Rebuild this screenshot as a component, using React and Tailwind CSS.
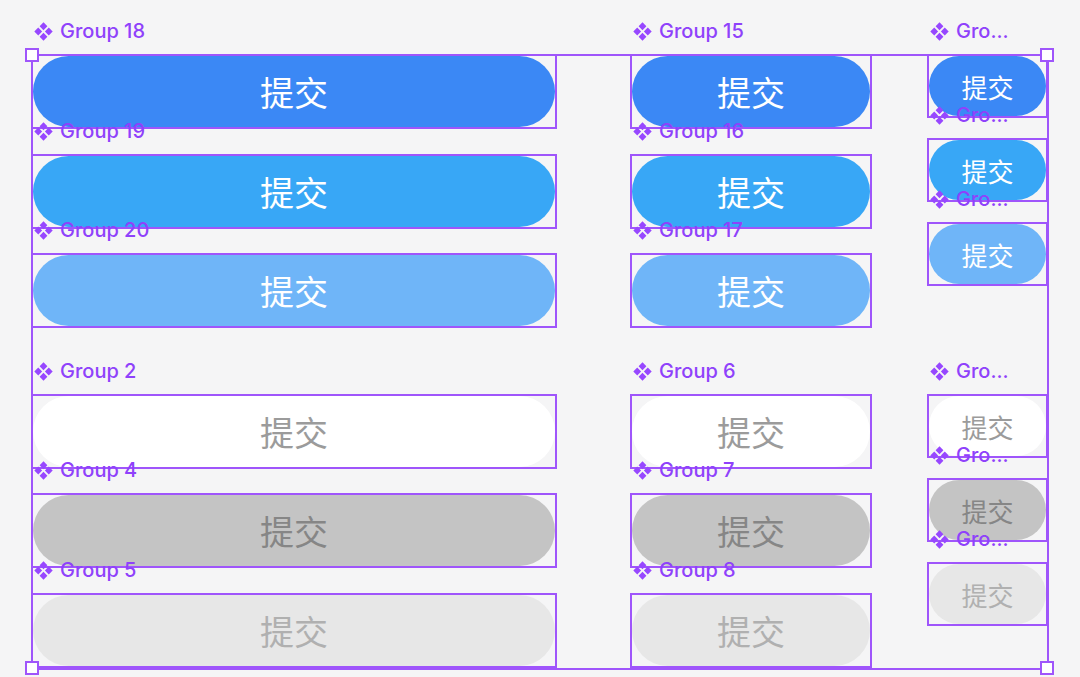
const PURPLE = '#9747ff';

function ComponentIcon() {
  return (
    <svg width="19" height="19" viewBox="0 0 18 18" className="shrink-0" aria-hidden="true">
      <path d="M9 0.3 L12.7 4 L9 7.7 L5.3 4 Z" fill={PURPLE} />
      <path d="M9 10.3 L12.7 14 L9 17.7 L5.3 14 Z" fill={PURPLE} />
      <path d="M4 5.3 L7.7 9 L4 12.7 L0.3 9 Z" fill={PURPLE} />
      <path d="M14 5.3 L17.7 9 L14 12.7 L10.3 9 Z" fill={PURPLE} />
    </svg>
  );
}

const tones = {
  blue: 'bg-[#3b88f5] text-white',
  sky: 'bg-[#38a7f6] text-white',
  light: 'bg-[#6fb5f8] text-white',
  white: 'bg-white text-[#9b9b9b]',
  gray: 'bg-[#c4c4c4] text-[#868686]',
  pale: 'bg-[#e7e7e7] text-[#b0b0b0]',
};

function Group({ label, tone, small = false, className = '' }) {
  return (
    <div className={`relative ${small ? 'h-[64px]' : 'h-[75px]'} ${className}`}>
      <div className="absolute left-[3px] -top-[34px] z-10 flex h-[22px] items-center gap-[7px] text-[20px] font-medium leading-none text-[#8f41fb] whitespace-nowrap">
        <ComponentIcon />
        <span>{label}</span>
      </div>
      <div className="h-full border-2 border-[#9f55fb]">
        <button
          type="button"
          className={`flex h-full w-full items-center justify-center rounded-full ${tones[tone]} ${small ? 'text-[26px]' : 'text-[34px]'}`}
          style={{ fontFamily: '"Noto Sans CJK SC", "Noto Sans", sans-serif' }}
        >
          提交
        </button>
      </div>
    </div>
  );
}

function Handle({ className }) {
  return <div className={`absolute z-20 h-[14px] w-[14px] border-2 border-[#9f55fb] bg-white ${className}`} />;
}

export default function App() {
  return (
    <div
      className="relative flex h-[677px] w-[1080px] overflow-hidden bg-[#f5f5f6] pl-[31px] pt-[54px]"
      style={{ fontFamily: 'Inter, "Noto Sans", sans-serif' }}
    >
      {/* column 1 */}
      <div className="flex w-[526px] flex-col">
        <Group label="Group 18" tone="blue" />
        <Group label="Group 19" tone="sky" className="mt-[25px]" />
        <Group label="Group 20" tone="light" className="mt-[24px]" />
        <Group label="Group 2" tone="white" className="mt-[66px]" />
        <Group label="Group 4" tone="gray" className="mt-[24px]" />
        <Group label="Group 5" tone="pale" className="mt-[25px]" />
      </div>

      {/* column 2 */}
      <div className="ml-[73px] flex w-[242px] flex-col">
        <Group label="Group 15" tone="blue" />
        <Group label="Group 16" tone="sky" className="mt-[25px]" />
        <Group label="Group 17" tone="light" className="mt-[24px]" />
        <Group label="Group 6" tone="white" className="mt-[66px]" />
        <Group label="Group 7" tone="gray" className="mt-[24px]" />
        <Group label="Group 8" tone="pale" className="mt-[25px]" />
      </div>

      {/* column 3 */}
      <div className="ml-[55px] flex w-[121px] flex-col">
        <Group label="Gro..." tone="blue" small />
        <Group label="Gro..." tone="sky" small className="mt-[20px]" />
        <Group label="Gro..." tone="light" small className="mt-[20px]" />
        <Group label="Gro..." tone="white" small className="mt-[108px]" />
        <Group label="Gro..." tone="gray" small className="mt-[20px]" />
        <Group label="Gro..." tone="pale" small className="mt-[20px]" />
      </div>

      {/* selection overlay */}
      <div className="pointer-events-none absolute left-[31px] top-[54px] h-[616px] w-[1018px] border-2 border-[#9f55fb]" />
      <Handle className="left-[25px] top-[48px]" />
      <Handle className="left-[1040px] top-[48px]" />
      <Handle className="left-[25px] top-[661px]" />
      <Handle className="left-[1040px] top-[661px]" />
    </div>
  );
}
